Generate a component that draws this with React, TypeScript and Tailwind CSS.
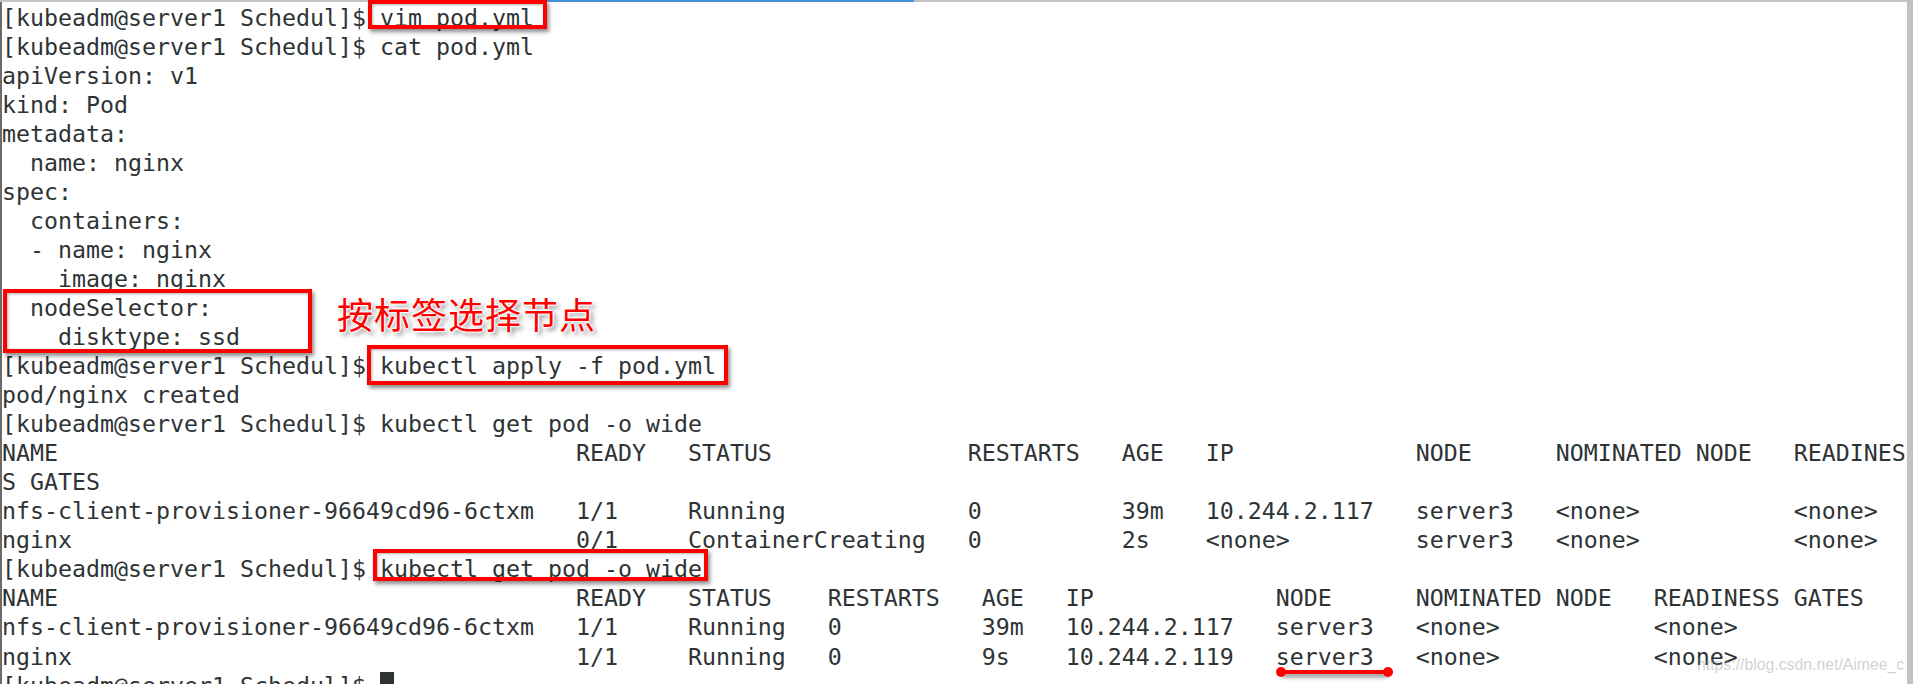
const lines: string[] = [
  "[kubeadm@server1 Schedul]$ vim pod.yml",
  "[kubeadm@server1 Schedul]$ cat pod.yml",
  "apiVersion: v1",
  "kind: Pod",
  "metadata:",
  "  name: nginx",
  "spec:",
  "  containers:",
  "  - name: nginx",
  "    image: nginx",
  "  nodeSelector:",
  "    disktype: ssd",
  "[kubeadm@server1 Schedul]$ kubectl apply -f pod.yml",
  "pod/nginx created",
  "[kubeadm@server1 Schedul]$ kubectl get pod -o wide",
  "NAME                                     READY   STATUS              RESTARTS   AGE   IP             NODE      NOMINATED NODE   READINES",
  "S GATES",
  "nfs-client-provisioner-96649cd96-6ctxm   1/1     Running             0          39m   10.244.2.117   server3   <none>           <none>",
  "nginx                                    0/1     ContainerCreating   0          2s    <none>         server3   <none>           <none>",
  "[kubeadm@server1 Schedul]$ kubectl get pod -o wide",
  "NAME                                     READY   STATUS    RESTARTS   AGE   IP             NODE      NOMINATED NODE   READINESS GATES",
  "nfs-client-provisioner-96649cd96-6ctxm   1/1     Running   0          39m   10.244.2.117   server3   <none>           <none>",
  "nginx                                    1/1     Running   0          9s    10.244.2.119   server3   <none>           <none>",
];

function Box({ className }: { className: string }) {
  return (
    <div
      className={`absolute border-[4px] border-[#ff0000] shadow-[2px_3px_4px_rgba(0,0,0,0.45),inset_1px_1px_3px_rgba(0,0,0,0.3)] ${className}`}
    />
  );
}

export default function App() {
  return (
    <div className="relative flex h-[684px] w-[1913px] flex-col overflow-hidden bg-white">
      <div className="flex h-[2px] shrink-0 bg-[#c2c2c2]">
        <div className="ml-[467px] w-[447px] bg-[#4a90d9]" />
      </div>
      <div className="flex min-h-0 flex-1">
        <main className="min-w-0 flex-1 border-l-[2px] border-[#6b6b6b]">
          <div className="pt-[0.5px] font-['DejaVu_Sans_Mono',monospace] text-[23.26px] leading-[29.06px] text-[#2e3436]">
            {lines.map((line, i) => (
              <div key={i} className="h-[29.06px] whitespace-pre">
                {line}
              </div>
            ))}
            <div className="flex h-[29.06px] whitespace-pre">
              <span>{"[kubeadm@server1 Schedul]$ "}</span>
              <span className="mt-[1px] h-[29px] w-[14px] bg-[#2e3436]" />
            </div>
          </div>
        </main>
        <aside className="w-[6px] shrink-0 bg-[#c2c2c2]" />
      </div>

      <Box className="left-[368px] top-0 h-[29px] w-[179px]" />
      <Box className="left-[3px] top-[289px] h-[64px] w-[309px]" />
      <Box className="left-[367px] top-[345px] h-[40px] w-[361px]" />
      <Box className="left-[373px] top-[549px] h-[32px] w-[335px]" />

      <div className="absolute left-[337px] top-[290px] font-['Noto_Sans_CJK_SC',sans-serif] text-[36px] leading-[46px] tracking-[1px] text-[#ff0000] [text-shadow:1px_0_1px_#fff,-1px_0_1px_#fff,0_1px_1px_#fff,0_-1px_1px_#fff,0_0_4px_#fff,3px_3px_5px_rgba(0,0,0,0.55)]">
        按标签选择节点
      </div>

      <div className="absolute left-[1281px] top-[670px] h-[4px] w-[107px] bg-[#ff0000] shadow-[1px_3px_4px_rgba(0,0,0,0.5)]" />
      <div className="absolute left-[1276px] top-[667px] size-[10px] rounded-full bg-[#ff0000]" />
      <div className="absolute left-[1383px] top-[667px] size-[10px] rounded-full bg-[#ff0000]" />

      <div className="absolute left-[1697px] top-[654px] font-['Liberation_Sans',sans-serif] text-[15.8px] leading-[22px] text-[#8a8a8a]/40">
        https://blog.csdn.net/Aimee_c
      </div>
    </div>
  );
}
